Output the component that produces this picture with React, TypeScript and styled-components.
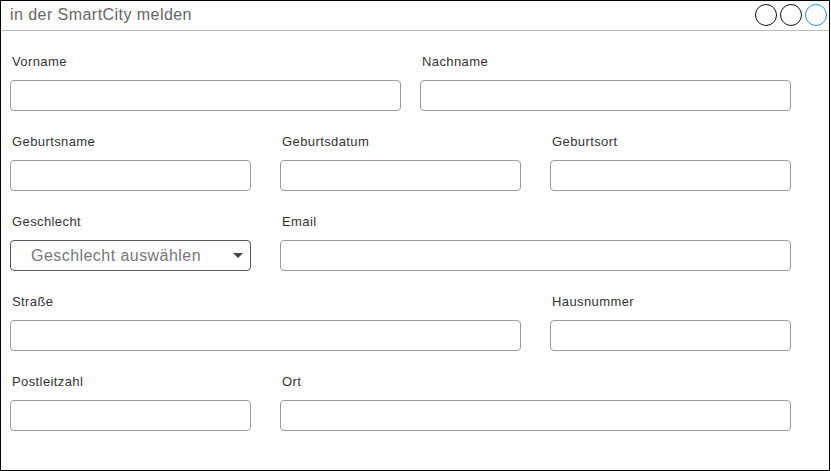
import React from 'react'
import styled, { createGlobalStyle } from 'styled-components'

const GlobalStyle = createGlobalStyle`
  html, body {
    margin: 0;
    padding: 0;
    background: #ffffff;
  }
  * {
    box-sizing: border-box;
  }
`

type Field = {
  label: string
  span: string
  select?: boolean
  placeholder?: string
}

const rows: { columns: string; gap: number; fields: Field[] }[] = [
  {
    columns: '391px 371px',
    gap: 19,
    fields: [
      { label: 'Vorname', span: '1' },
      { label: 'Nachname', span: '2' },
    ],
  },
  {
    columns: 'repeat(3, 241px)',
    gap: 29,
    fields: [
      { label: 'Geburtsname', span: '1' },
      { label: 'Geburtsdatum', span: '2' },
      { label: 'Geburtsort', span: '3' },
    ],
  },
  {
    columns: 'repeat(3, 241px)',
    gap: 29,
    fields: [
      { label: 'Geschlecht', span: '1', select: true, placeholder: 'Geschlecht auswählen' },
      { label: 'Email', span: '2 / 4' },
    ],
  },
  {
    columns: 'repeat(3, 241px)',
    gap: 29,
    fields: [
      { label: 'Straße', span: '1 / 3' },
      { label: 'Hausnummer', span: '3' },
    ],
  },
  {
    columns: 'repeat(3, 241px)',
    gap: 29,
    fields: [
      { label: 'Postleitzahl', span: '1' },
      { label: 'Ort', span: '2 / 4' },
    ],
  },
]

const App = () => {
  return (
    <>
      <GlobalStyle />
      <Window>
        <TitleBar>
          <Title>in der SmartCity melden</Title>
          <WindowButtons>
            <WindowButton />
            <WindowButton />
            <WindowButton $active />
          </WindowButtons>
        </TitleBar>
        <Form>
          {rows.map((row, rowIndex) => (
            <FormRow key={rowIndex} $columns={row.columns} $gap={row.gap}>
              {row.fields.map((field) => (
                <FieldGroup key={field.label} $span={field.span}>
                  <Label>{field.label}</Label>
                  {field.select ? (
                    <SelectBox>
                      <span>{field.placeholder}</span>
                      <Caret />
                    </SelectBox>
                  ) : (
                    <TextInput type="text" />
                  )}
                </FieldGroup>
              ))}
            </FormRow>
          ))}
        </Form>
      </Window>
    </>
  )
}

export default App

const Window = styled.div`
  width: 830px;
  height: 471px;
  border: 1px solid #000000;
  background: #ffffff;
  display: flex;
  flex-direction: column;
  font-family: 'Liberation Sans', Arial, sans-serif;
`

const TitleBar = styled.div`
  height: 30px;
  border-bottom: 1px solid #bdbdbd;
  display: flex;
  align-items: center;
  justify-content: space-between;
  padding: 0 2px 2px 9px;
`

const Title = styled.div`
  font-size: 16px;
  letter-spacing: 0.45px;
  color: #666666;
`

const WindowButtons = styled.div`
  display: flex;
  gap: 3px;
`

const WindowButton = styled.div<{ $active?: boolean }>`
  width: 22px;
  height: 22px;
  border-radius: 50%;
  border: 1.5px solid ${(p) => (p.$active ? '#2a8ef5' : '#111111')};
`

const Form = styled.div`
  padding: 23px 0 0 9px;
  display: flex;
  flex-direction: column;
  gap: 23px;
`

const FormRow = styled.div<{ $columns: string; $gap: number }>`
  display: grid;
  grid-template-columns: ${(p) => p.$columns};
  column-gap: ${(p) => p.$gap}px;
`

const FieldGroup = styled.div<{ $span: string }>`
  grid-column: ${(p) => p.$span};
  display: flex;
  flex-direction: column;
  gap: 11px;
`

const Label = styled.label`
  font-size: 13px;
  line-height: 15px;
  letter-spacing: 0.4px;
  color: #333333;
  padding-left: 2px;
`

const TextInput = styled.input`
  height: 31px;
  width: 100%;
  border: 1px solid #9a9a9a;
  border-radius: 4px;
  background: #ffffff;
  outline: none;
  padding: 0 8px;
  font-family: 'Liberation Sans', Arial, sans-serif;
  font-size: 14px;
`

const SelectBox = styled.div`
  height: 31px;
  width: 100%;
  border: 1px solid #555555;
  border-radius: 4px;
  display: flex;
  align-items: center;
  justify-content: space-between;
  padding: 0 7px 0 20px;
  font-size: 16px;
  letter-spacing: 0.45px;
  color: #777777;
`

const Caret = styled.span`
  width: 0;
  height: 0;
  border-left: 5px solid transparent;
  border-right: 5px solid transparent;
  border-top: 5px solid #444444;
`
